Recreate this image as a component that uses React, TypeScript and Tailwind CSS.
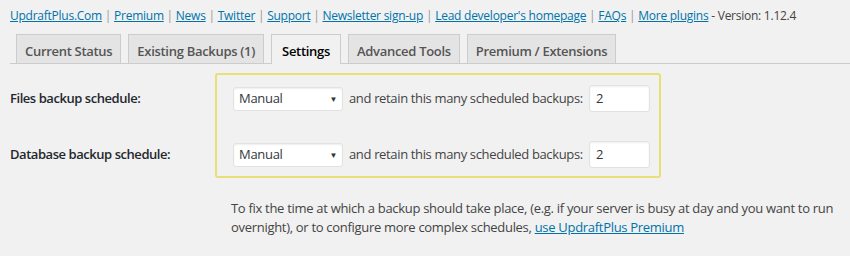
import React from "react";

const LINKS = [
  "UpdraftPlus.Com",
  "Premium",
  "News",
  "Twitter",
  "Support",
  "Newsletter sign-up",
  "Lead developer's homepage",
  "FAQs",
  "More plugins",
];

const TABS = [
  { label: "Current Status" },
  { label: "Existing Backups (1)" },
  { label: "Settings", active: true },
  { label: "Advanced Tools" },
  { label: "Premium / Extensions" },
];

const Select = () => (
  <div className="flex h-[24px] w-[110px] items-center justify-between rounded-[3px] border border-[#e2e2e2] bg-white pl-[5px] pr-[5px] text-[13px] tracking-[-0.3px] text-[#32373c] shadow-[inset_0_1px_2px_rgba(0,0,0,0.07)]">
    <span>Manual</span>
    <span className="text-[8px] leading-none text-[#333]">▼</span>
  </div>
);

const Row = () => (
  <div className="flex h-[27px] items-center">
    <Select />
    <span className="ml-[6px] whitespace-nowrap text-[13px] tracking-[-0.35px] text-[#444]">
      and retain this many scheduled backups:
    </span>
    <div className="ml-[6px] flex h-[27px] w-[61px] items-center rounded-[3px] border border-[#e2e2e2] bg-white pl-[6px] text-[13px] text-[#32373c] shadow-[inset_0_1px_2px_rgba(0,0,0,0.07)]">
      2
    </div>
  </div>
);

export default function App() {
  return (
    <div className="h-[256px] w-[850px] overflow-hidden bg-[#f1f1f1] pl-[10px] font-['Open_Sans',sans-serif] text-[13px] text-[#444]">
      <div className="pt-[6px] text-[12px] leading-[19px] tracking-[-0.25px] whitespace-nowrap">
        {LINKS.map((l, i) => (
          <span key={l}>
            {i > 0 && <span className="text-[#999]"> | </span>}
            <a href="#" className="text-[#0073aa] underline">
              {l}
            </a>
          </span>
        ))}
        <span> - Version: 1.12.4</span>
      </div>

      <nav className="mt-[9px] flex items-end gap-[7px] border-b border-[#ccc] pl-[6px]">
        {TABS.map((t) => (
          <a
            key={t.label}
            href="#"
            className={
              t.active
                ? "-mb-px border border-b-0 border-[#ccc] bg-[#f1f1f1] px-[10px] pt-[4px] pb-px text-[13px] leading-[24px] font-semibold tracking-[-0.3px] text-black"
                : "border border-b-0 border-[#ccc] bg-[#e4e4e4] px-[8px] pt-[4px] text-[13px] leading-[24px] font-semibold tracking-[-0.3px] text-[#555]"
            }
          >
            {t.label}
          </a>
        ))}
      </nav>

      <div className="mt-[9px] flex">
        <div className="flex w-[205px] flex-col gap-[29px] pt-[12px] text-[13px] font-semibold tracking-[-0.45px] text-[#23282d]">
          <div className="flex h-[27px] items-center">Files backup schedule:</div>
          <div className="flex h-[27px] items-center">Database backup schedule:</div>
        </div>
        <div className="flex h-[105px] w-[446px] flex-col gap-[29px] rounded-[3px] border-2 border-[#e8df7a] pt-[10px] pl-[16px]">
          <Row />
          <Row />
        </div>
      </div>

      <p className="mt-[21px] ml-[221px] w-[615px] text-[13px] leading-[19px] tracking-[-0.3px] text-[#444]">
        To fix the time at which a backup should take place, (e.g. if your server is busy at day and you want to run
        overnight), or to configure more complex schedules,{" "}
        <a href="#" className="text-[#0073aa] underline">
          use UpdraftPlus Premium
        </a>
      </p>
    </div>
  );
}
